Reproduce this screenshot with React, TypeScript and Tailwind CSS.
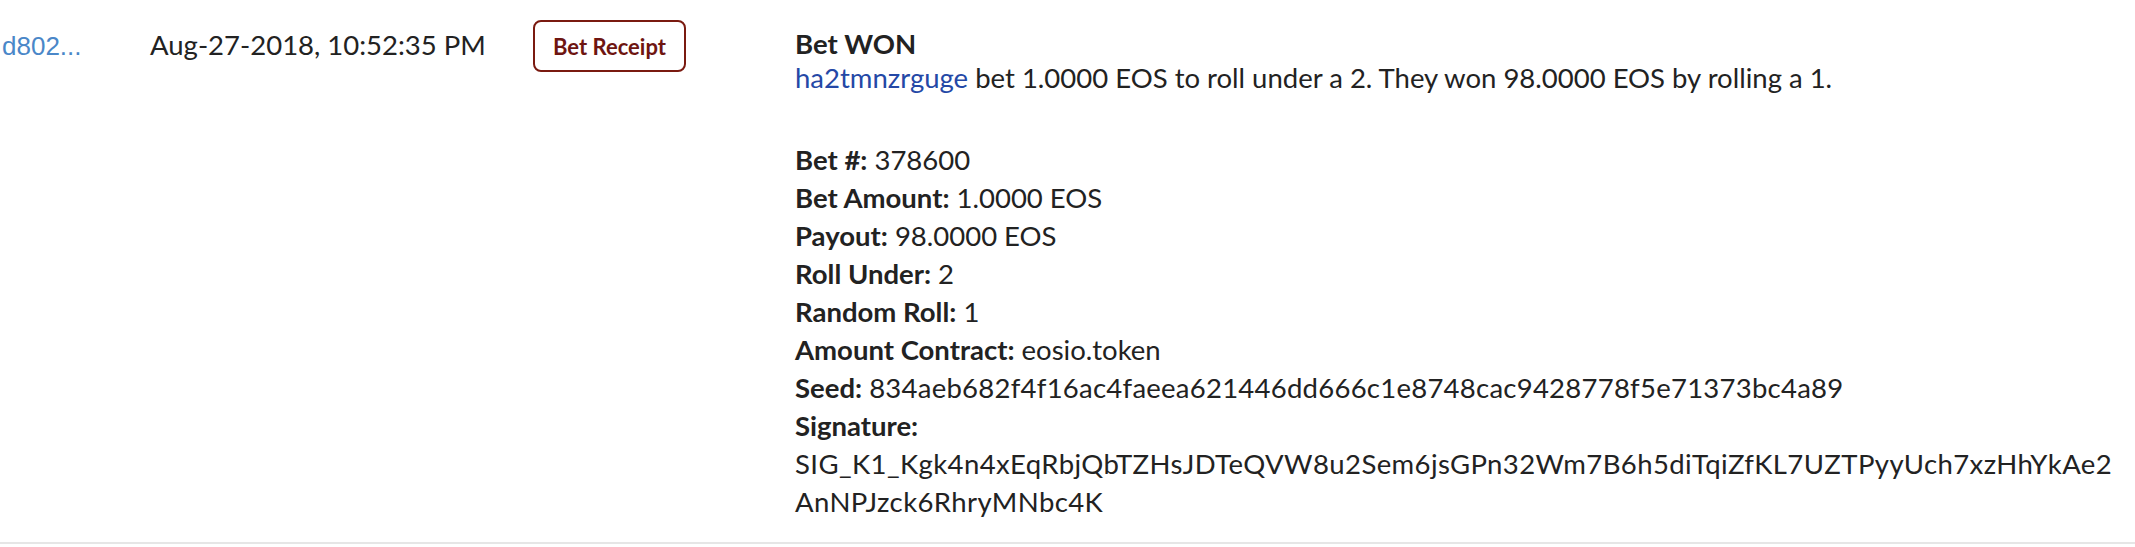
export default function App() {
  const details = [
    { label: "Bet #:", value: "378600" },
    { label: "Bet Amount:", value: "1.0000 EOS" },
    { label: "Payout:", value: "98.0000 EOS" },
    { label: "Roll Under:", value: "2" },
    { label: "Random Roll:", value: "1" },
    { label: "Amount Contract:", value: "eosio.token" },
  ];

  return (
    <div className="w-full bg-white font-['Lato','Noto_Sans',sans-serif] text-[27.5px] text-[#222222]">
      <div className="flex items-start h-[544px] border-b-2 border-[#e6e6e6] pt-[28px]">
        <a className="w-[150px] shrink-0 pl-[2px] mt-[2px] leading-[33px] font-['Liberation_Sans',Arial,sans-serif] text-[26px] text-[#4a87c8]">
          d802...
        </a>
        <div className="w-[383px] shrink-0 leading-[33px]">Aug-27-2018, 10:52:35 PM</div>

        <div className="w-[262px] shrink-0 -mt-[8px]">
          <button className="h-[52px] w-[153px] rounded-[8px] border-2 border-[#7a1a10] text-[22px] font-bold text-[#6e1511]">
            Bet Receipt
          </button>
        </div>

        <div className="flex-1 min-w-0 break-words">
          <div className="font-bold leading-[31px]">Bet WON</div>
          <div className="leading-[38px]">
            <a className="text-[#2448a6]">ha2tmnzrguge</a> bet 1.0000 EOS to roll under a 2. They won 98.0000
            EOS by rolling a 1.
          </div>
          <div className="mt-[44px] leading-[38px]">
            {details.map((d) => (
              <div key={d.label}>
                <span className="font-bold">{d.label}</span> {d.value}
              </div>
            ))}
            <div>
              <span className="font-bold">Seed:</span>{" "}
              <span className="tracking-[0.25px]">834aeb682f4f16ac4faeea621446dd666c1e8748cac9428778f5e71373bc4a89</span>
            </div>
            <div className="font-bold">Signature:</div>
            <div className="tracking-[0.4px]">
              SIG_K1_Kgk4n4xEqRbjQbTZHsJDTeQVW8u2Sem6jsGPn32Wm7B6h5diTqiZfKL7UZTPyyUch7xzHhYkAe2
              <wbr />
              AnNPJzck6RhryMNbc4K
            </div>
          </div>
        </div>
      </div>
    </div>
  );
}
